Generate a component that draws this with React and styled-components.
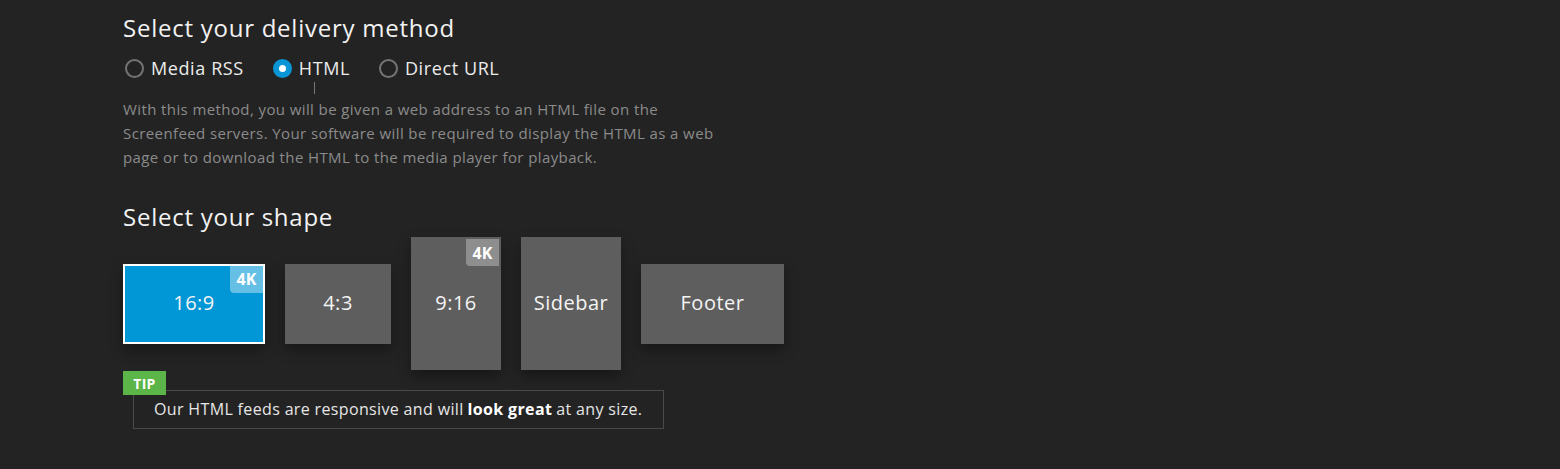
import React from 'react'
import styled, { createGlobalStyle } from 'styled-components'

const Global = createGlobalStyle`
  html, body {
    margin: 0;
    padding: 0;
    background: #232323;
  }
  body {
    font-family: "Open Sans", "Liberation Sans", sans-serif;
    color: #eee;
  }
`

const Page = styled.div`
  padding: 12px 0 40px 123px;
  height: 469px;
  box-sizing: border-box;
  overflow: hidden;
`

const Heading = styled.h2`
  margin: ${p => p.$top || 0}px 0 0;
  font-size: 24px;
  font-weight: 400;
  line-height: 32px;
  letter-spacing: 0.75px;
  color: #f2f2f2;
`

const RadioRow = styled.div`
  position: relative;
  display: flex;
  align-items: center;
  gap: 27px;
  margin-top: 12px;
  height: 24px;
`

const RadioItem = styled.label`
  display: flex;
  align-items: center;
  gap: 7px;
  padding-left: 2px;
  font-size: 18px;
  letter-spacing: 0.6px;
  color: #ececec;
`

const Circle = styled.span`
  box-sizing: border-box;
  width: 19px;
  height: 19px;
  border-radius: 50%;
  border: 2px solid ${p => (p.$on ? '#0a95d6' : '#747474')};
  background: ${p => (p.$on ? '#0a95d6' : 'transparent')};
  display: flex;
  align-items: center;
  justify-content: center;

  &::after {
    content: '';
    display: ${p => (p.$on ? 'block' : 'none')};
    width: 7px;
    height: 7px;
    border-radius: 50%;
    background: #fff;
  }
`

const Caret = styled.span`
  position: absolute;
  left: 191px;
  top: 26px;
  width: 1px;
  height: 12px;
  background: #777;
`

const Description = styled.p`
  margin: 17px 0 0;
  width: 600px;
  font-size: 15px;
  line-height: 24px;
  letter-spacing: 0.4px;
  color: #8b8b8b;
`

const ShapeRow = styled.div`
  display: flex;
  align-items: center;
  gap: 20px;
  margin-top: 4px;
`

const Shape = styled.div`
  position: relative;
  box-sizing: border-box;
  width: ${p => p.$w}px;
  height: ${p => p.$h}px;
  padding-bottom: 3px;
  display: flex;
  align-items: center;
  justify-content: center;
  background: ${p => (p.$active ? '#0196d5' : '#5e5e5e')};
  border: ${p => (p.$active ? '2px solid #fff' : 'none')};
  box-shadow: 0 6px 12px rgba(0, 0, 0, 0.35);
  font-size: 20px;
  letter-spacing: 0.5px;
  color: #f4f4f4;
`

const Badge = styled.span`
  position: absolute;
  top: ${p => (p.$inset ? 0 : 2)}px;
  right: ${p => (p.$inset ? 0 : 2)}px;
  width: 33px;
  height: 27px;
  display: flex;
  align-items: center;
  justify-content: center;
  border-bottom-left-radius: 4px;
  background: ${p => (p.$light ? 'rgba(255,255,255,0.4)' : '#8e8e8e')};
  font-size: 16px;
  font-weight: 700;
  letter-spacing: 0;
  color: #fff;
`

const TipWrap = styled.div`
  position: relative;
  margin-top: 1px;
  padding: 19px 0 0 10px;
`

const TipTag = styled.span`
  position: absolute;
  top: 0;
  left: 0;
  z-index: 1;
  width: 43px;
  height: 24px;
  display: flex;
  align-items: center;
  justify-content: center;
  background: #5bb548;
  font-size: 14px;
  font-weight: 700;
  letter-spacing: 0.3px;
  color: #fff;
`

const TipBox = styled.div`
  box-sizing: border-box;
  width: 531px;
  height: 39px;
  display: flex;
  align-items: center;
  padding: 0 0 2px 20px;
  border: 1px solid #4a4a4a;
  font-size: 16px;
  letter-spacing: 0.35px;
  color: #e6e6e6;

  b {
    font-weight: 700;
    color: #fff;
    margin: 0 0.25em;
  }
`

const methods = [
  { label: 'Media RSS' },
  { label: 'HTML', on: true },
  { label: 'Direct URL' },
]

const shapes = [
  { label: '16:9', w: 142, h: 80, active: true, badge: true },
  { label: '4:3', w: 106, h: 80 },
  { label: '9:16', w: 90, h: 133, badge: true },
  { label: 'Sidebar', w: 100, h: 133 },
  { label: 'Footer', w: 143, h: 80 },
]

export default function App() {
  return (
    <Page>
      <Global />
      <Heading>Select your delivery method</Heading>
      <RadioRow>
        {methods.map(m => (
          <RadioItem key={m.label}>
            <Circle $on={m.on} />
            {m.label}
          </RadioItem>
        ))}
        <Caret />
      </RadioRow>
      <Description>
        With this method, you will be given a web address to an HTML file on the
        Screenfeed servers. Your software will be required to display the HTML as a web
        page or to download the HTML to the media player for playback.
      </Description>

      <Heading $top={32}>Select your shape</Heading>
      <ShapeRow>
        {shapes.map(s => (
          <Shape key={s.label} $w={s.w} $h={s.h} $active={s.active}>
            {s.label}
            {s.badge && (
              <Badge $light={s.active} $inset={s.active}>
                4K
              </Badge>
            )}
          </Shape>
        ))}
      </ShapeRow>

      <TipWrap>
        <TipTag>TIP</TipTag>
        <TipBox>
          Our HTML feeds are responsive and will<b>look great</b>at any size.
        </TipBox>
      </TipWrap>
    </Page>
  )
}
